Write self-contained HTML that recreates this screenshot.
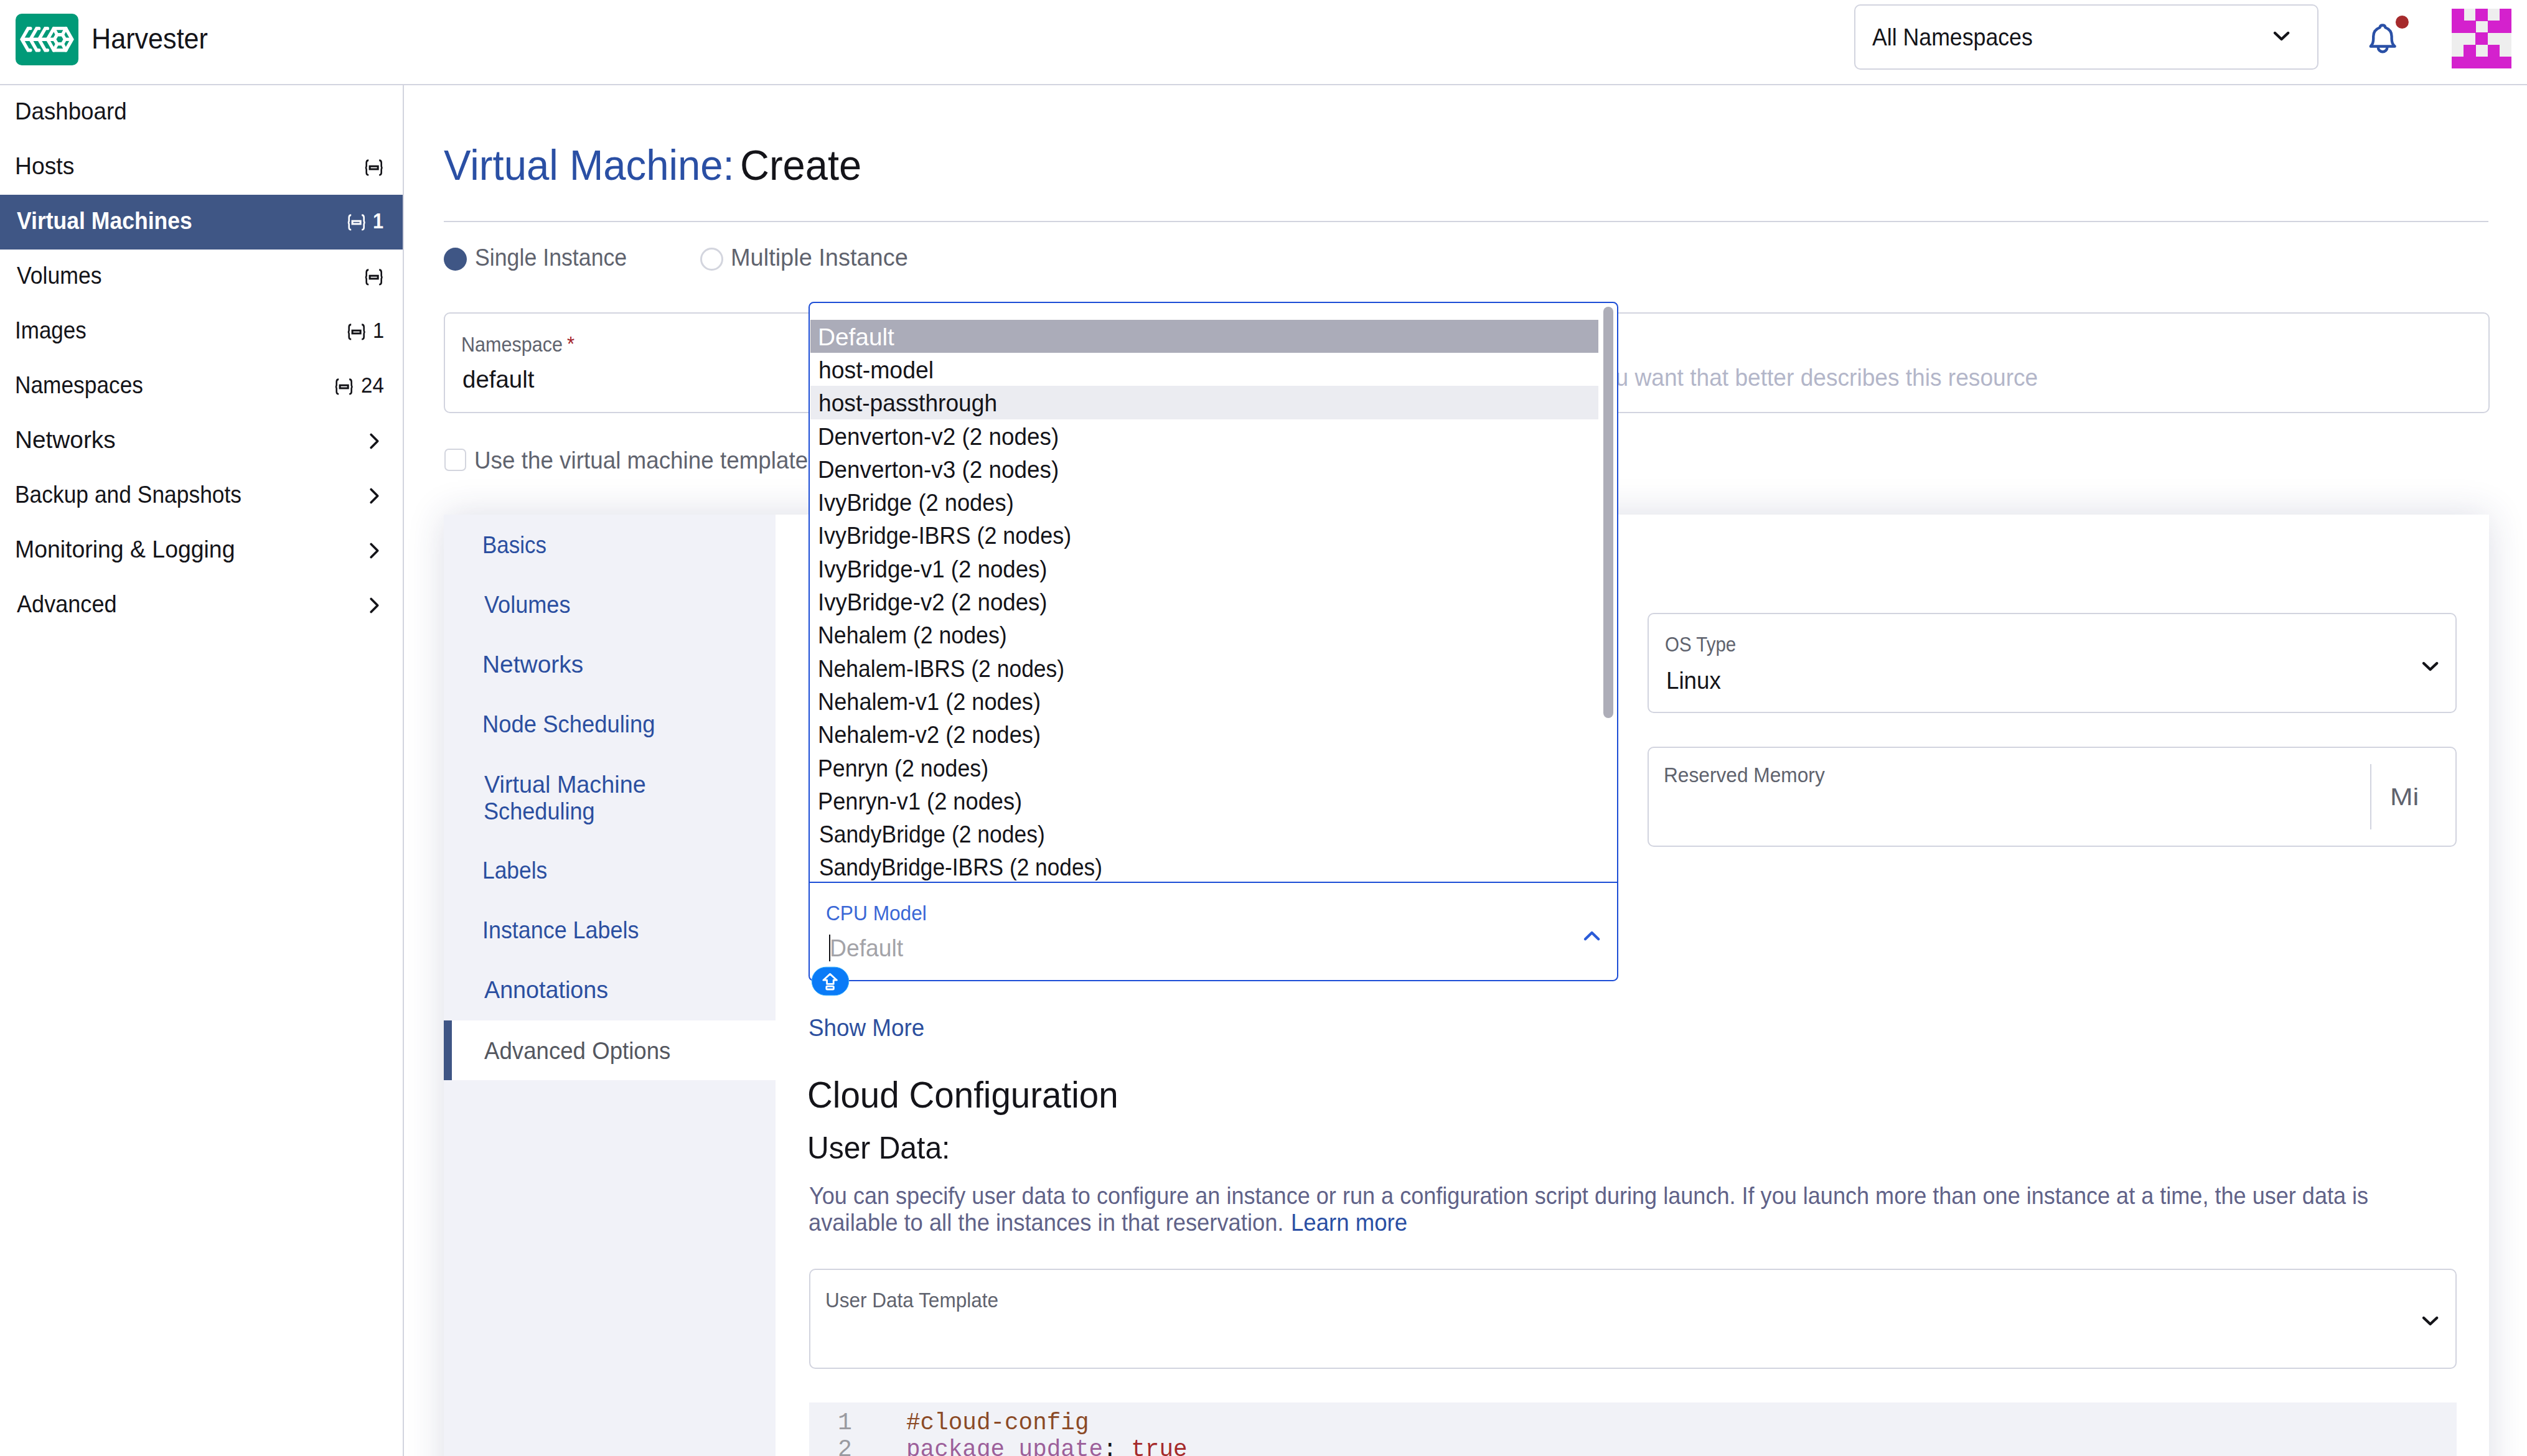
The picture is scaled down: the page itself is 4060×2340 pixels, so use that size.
<!DOCTYPE html>
<html><head><meta charset="utf-8"><title>Harvester - Virtual Machine: Create</title>
<style>
html,body{margin:0;padding:0;width:4060px;height:2340px;overflow:hidden;background:#fff;}
body{position:relative;font-family:'Liberation Sans', sans-serif;}
.t{position:absolute;white-space:nowrap;line-height:1;transform-origin:0 0;}
</style></head><body>
<div style="position:absolute;left:0.00px;top:135.00px;width:4060.00px;height:2.00px;background:#d2d4df"></div>
<div style="position:absolute;left:647.00px;top:137.00px;width:2.00px;height:2203.00px;background:#d2d4df"></div>
<div style="position:absolute;left:0.00px;top:313.00px;width:647.00px;height:88.00px;background:#3f5685"></div>
<svg style="position:absolute;left:25px;top:22px" width="101" height="83" viewBox="0 0 101 83">
<rect x="0" y="0" width="101" height="83" rx="10" fill="#009a78"/>
<g fill="none" stroke="#fff" stroke-width="5.35" stroke-linecap="round" stroke-linejoin="miter">
<polyline points="23.9,23.65 20.2,23.65 10.1,41.2 20.2,58.75 23.9,58.75"/>
<polyline points="37.65,23.65 33.95,23.65 23.85,41.2 33.95,58.75 37.65,58.75"/>
<polyline points="51.4,23.65 47.7,23.65 37.6,41.2 47.7,58.75 51.4,58.75"/>
<polygon points="51.35,41.2 61.45,23.65 80.75,23.65 90.8,41.2 80.75,58.75 61.45,58.75"/>
<polygon points="62.36,41.2 66.68,33.77 75.32,33.77 79.64,41.2 75.32,48.63 66.68,48.63"/>
<line x1="10.1" y1="41.2" x2="62.36" y2="41.2" stroke-linecap="butt"/><line x1="79.64" y1="41.2" x2="90.8" y2="41.2" stroke-linecap="butt"/>
<line x1="66.68" y1="33.77" x2="61.45" y2="23.65"/><line x1="75.32" y1="33.77" x2="80.75" y2="23.65"/>
<line x1="66.68" y1="48.63" x2="61.45" y2="58.75"/><line x1="75.32" y1="48.63" x2="80.75" y2="58.75"/>
</g></svg>
<div style="position:absolute;left:2979.00px;top:7.00px;width:746.00px;height:105.00px;box-sizing:border-box;border:2px solid #d2d4df;border-radius:10px"></div>
<svg style="position:absolute;left:3644.90px;top:42.70px" width="41.20" height="30.00" viewBox="3644.90 42.70 41.20 30.00"><polyline points="3654.90,52.70 3665.50,62.70 3676.10,52.70" fill="none" stroke="#141419" stroke-width="4.40" stroke-linecap="round" stroke-linejoin="round"/></svg>
<svg style="position:absolute;left:3796px;top:20px" width="80" height="76" viewBox="3796 20 80 76">
<g fill="none" stroke="#2a50a6" stroke-width="4.4" stroke-linecap="round" stroke-linejoin="round">
<path d="M3808.8,74.5 L3847.6,74.5"/>
<path d="M3809.5,73.5 C3812.5,70.5 3813.2,67 3813.2,62 L3813.2,58.5 C3813.2,51 3817.5,46.5 3823.5,44.2 A4.6,4.6 0 0 1 3832.5,44.2 C3838.5,46.5 3842.6,51 3842.6,58.5 L3842.6,62 C3842.6,67 3843.5,70.5 3846.5,73.5"/>
<path d="M3820.8,76 A7.3,7.3 0 0 0 3835.4,76"/>
</g><circle cx="3859.4" cy="35.5" r="10.5" fill="#a62a2c"/></svg>
<svg style="position:absolute;left:3939px;top:14px" width="96" height="96" viewBox="0 0 5 5" shape-rendering="crispEdges"><rect width="5" height="5" fill="#eeeeee"/><rect x="0" y="0" width="1.02" height="1.02" fill="#d421cd"/><rect x="2" y="0" width="1.02" height="1.02" fill="#d421cd"/><rect x="4" y="0" width="1.02" height="1.02" fill="#d421cd"/><rect x="0" y="1" width="1.02" height="1.02" fill="#d421cd"/><rect x="1" y="1" width="1.02" height="1.02" fill="#d421cd"/><rect x="3" y="1" width="1.02" height="1.02" fill="#d421cd"/><rect x="4" y="1" width="1.02" height="1.02" fill="#d421cd"/><rect x="2" y="2" width="1.02" height="1.02" fill="#d421cd"/><rect x="1" y="3" width="1.02" height="1.02" fill="#d421cd"/><rect x="3" y="3" width="1.02" height="1.02" fill="#d421cd"/><rect x="0" y="4" width="1.02" height="1.02" fill="#d421cd"/><rect x="1" y="4" width="1.02" height="1.02" fill="#d421cd"/><rect x="2" y="4" width="1.02" height="1.02" fill="#d421cd"/><rect x="3" y="4" width="1.02" height="1.02" fill="#d421cd"/><rect x="4" y="4" width="1.02" height="1.02" fill="#d421cd"/></svg>
<svg style="position:absolute;left:584.5px;top:255.5px" width="32" height="28" viewBox="0 0 32 28"><g fill="none" stroke="#141419" stroke-width="2.6">
<path d="M7.2,1.6 C4.3,1.6 3.7,3.3 3.7,5.5 L3.7,10.6 C3.7,12.7 3.2,13.5 2.0,13.7 C3.2,13.9 3.7,14.7 3.7,16.8 L3.7,21.4 C3.7,23.6 4.3,25.2 7.2,25.2"/>
<path d="M24.2,1.6 C27.1,1.6 27.7,3.3 27.7,5.5 L27.7,10.6 C27.7,12.7 28.2,13.5 29.4,13.7 C28.2,13.9 27.7,14.7 27.7,16.8 L27.7,21.4 C27.7,23.6 27.1,25.2 24.2,25.2"/>
<rect x="9.1" y="11.2" width="13.1" height="4.7" stroke-width="3"/></g></svg>
<svg style="position:absolute;left:556.5px;top:343.5px" width="32" height="28" viewBox="0 0 32 28"><g fill="none" stroke="#ffffff" stroke-width="2.6">
<path d="M7.2,1.6 C4.3,1.6 3.7,3.3 3.7,5.5 L3.7,10.6 C3.7,12.7 3.2,13.5 2.0,13.7 C3.2,13.9 3.7,14.7 3.7,16.8 L3.7,21.4 C3.7,23.6 4.3,25.2 7.2,25.2"/>
<path d="M24.2,1.6 C27.1,1.6 27.7,3.3 27.7,5.5 L27.7,10.6 C27.7,12.7 28.2,13.5 29.4,13.7 C28.2,13.9 27.7,14.7 27.7,16.8 L27.7,21.4 C27.7,23.6 27.1,25.2 24.2,25.2"/>
<rect x="9.1" y="11.2" width="13.1" height="4.7" stroke-width="3"/></g></svg>
<svg style="position:absolute;left:584.5px;top:431.5px" width="32" height="28" viewBox="0 0 32 28"><g fill="none" stroke="#141419" stroke-width="2.6">
<path d="M7.2,1.6 C4.3,1.6 3.7,3.3 3.7,5.5 L3.7,10.6 C3.7,12.7 3.2,13.5 2.0,13.7 C3.2,13.9 3.7,14.7 3.7,16.8 L3.7,21.4 C3.7,23.6 4.3,25.2 7.2,25.2"/>
<path d="M24.2,1.6 C27.1,1.6 27.7,3.3 27.7,5.5 L27.7,10.6 C27.7,12.7 28.2,13.5 29.4,13.7 C28.2,13.9 27.7,14.7 27.7,16.8 L27.7,21.4 C27.7,23.6 27.1,25.2 24.2,25.2"/>
<rect x="9.1" y="11.2" width="13.1" height="4.7" stroke-width="3"/></g></svg>
<svg style="position:absolute;left:556.5px;top:519.5px" width="32" height="28" viewBox="0 0 32 28"><g fill="none" stroke="#141419" stroke-width="2.6">
<path d="M7.2,1.6 C4.3,1.6 3.7,3.3 3.7,5.5 L3.7,10.6 C3.7,12.7 3.2,13.5 2.0,13.7 C3.2,13.9 3.7,14.7 3.7,16.8 L3.7,21.4 C3.7,23.6 4.3,25.2 7.2,25.2"/>
<path d="M24.2,1.6 C27.1,1.6 27.7,3.3 27.7,5.5 L27.7,10.6 C27.7,12.7 28.2,13.5 29.4,13.7 C28.2,13.9 27.7,14.7 27.7,16.8 L27.7,21.4 C27.7,23.6 27.1,25.2 24.2,25.2"/>
<rect x="9.1" y="11.2" width="13.1" height="4.7" stroke-width="3"/></g></svg>
<svg style="position:absolute;left:537.0px;top:607.5px" width="32" height="28" viewBox="0 0 32 28"><g fill="none" stroke="#141419" stroke-width="2.6">
<path d="M7.2,1.6 C4.3,1.6 3.7,3.3 3.7,5.5 L3.7,10.6 C3.7,12.7 3.2,13.5 2.0,13.7 C3.2,13.9 3.7,14.7 3.7,16.8 L3.7,21.4 C3.7,23.6 4.3,25.2 7.2,25.2"/>
<path d="M24.2,1.6 C27.1,1.6 27.7,3.3 27.7,5.5 L27.7,10.6 C27.7,12.7 28.2,13.5 29.4,13.7 C28.2,13.9 27.7,14.7 27.7,16.8 L27.7,21.4 C27.7,23.6 27.1,25.2 24.2,25.2"/>
<rect x="9.1" y="11.2" width="13.1" height="4.7" stroke-width="3"/></g></svg>
<svg style="position:absolute;left:585px;top:692px" width="30" height="34" viewBox="585 692 30 34"><polyline points="596.2,698.5 606.7,709.0 596.2,719.5" fill="none" stroke="#141419" stroke-width="3.7" stroke-linecap="round" stroke-linejoin="round"/></svg>
<svg style="position:absolute;left:585px;top:780px" width="30" height="34" viewBox="585 780 30 34"><polyline points="596.2,786.5 606.7,797.0 596.2,807.5" fill="none" stroke="#141419" stroke-width="3.7" stroke-linecap="round" stroke-linejoin="round"/></svg>
<svg style="position:absolute;left:585px;top:868px" width="30" height="34" viewBox="585 868 30 34"><polyline points="596.2,874.5 606.7,885.0 596.2,895.5" fill="none" stroke="#141419" stroke-width="3.7" stroke-linecap="round" stroke-linejoin="round"/></svg>
<svg style="position:absolute;left:585px;top:956px" width="30" height="34" viewBox="585 956 30 34"><polyline points="596.2,962.5 606.7,973.0 596.2,983.5" fill="none" stroke="#141419" stroke-width="3.7" stroke-linecap="round" stroke-linejoin="round"/></svg>
<div style="position:absolute;left:713.00px;top:355.00px;width:3285.00px;height:2.00px;background:#d2d4df"></div>
<div style="position:absolute;left:713.00px;top:397.50px;width:37.00px;height:37.00px;border-radius:50%;background:#3f5685"></div>
<div style="position:absolute;left:1125.00px;top:397.50px;width:37.00px;height:37.00px;box-sizing:border-box;border-radius:50%;border:3px solid #d3d5de"></div>
<div style="position:absolute;left:713.00px;top:502.00px;width:900.00px;height:162.00px;box-sizing:border-box;border:2px solid #d2d4df;border-radius:10px"></div>
<div style="position:absolute;left:2000.00px;top:502.00px;width:2000.00px;height:162.00px;box-sizing:border-box;border:2px solid #d2d4df;border-radius:10px"></div>
<div style="position:absolute;left:714.00px;top:721.00px;width:35.00px;height:36.00px;box-sizing:border-box;border:2px solid #d3d5de;border-radius:7px"></div>
<div style="position:absolute;left:713.00px;top:827.00px;width:3286.00px;height:1700.00px;background:#fff;box-shadow:0 0 56px rgba(40,45,100,0.16)"></div>
<div style="position:absolute;left:713.00px;top:827.00px;width:533.00px;height:1700.00px;background:#f1f2f8"></div>
<div style="position:absolute;left:713.00px;top:1640.00px;width:533.00px;height:96.00px;background:#fff"></div>
<div style="position:absolute;left:713.00px;top:1640.00px;width:13.00px;height:96.00px;background:#3f5685"></div>
<div style="position:absolute;left:2647.00px;top:985.00px;width:1300.00px;height:161.00px;box-sizing:border-box;border:2px solid #d2d4df;border-radius:10px"></div>
<svg style="position:absolute;left:3884.10px;top:1055.80px" width="41.20" height="30.00" viewBox="3884.10 1055.80 41.20 30.00"><polyline points="3894.10,1065.80 3904.70,1075.80 3915.30,1065.80" fill="none" stroke="#141419" stroke-width="4.40" stroke-linecap="round" stroke-linejoin="round"/></svg>
<div style="position:absolute;left:2647.00px;top:1200.00px;width:1300.00px;height:161.00px;box-sizing:border-box;border:2px solid #d2d4df;border-radius:10px"></div>
<div style="position:absolute;left:3808.00px;top:1227.50px;width:2.00px;height:105.00px;background:#d2d4df"></div>
<div style="position:absolute;left:1300.00px;top:2039.00px;width:2647.00px;height:161.00px;box-sizing:border-box;border:2px solid #d2d4df;border-radius:10px"></div>
<svg style="position:absolute;left:3883.70px;top:2108.30px" width="41.20" height="30.00" viewBox="3883.70 2108.30 41.20 30.00"><polyline points="3893.70,2118.30 3904.30,2128.30 3914.90,2118.30" fill="none" stroke="#141419" stroke-width="4.40" stroke-linecap="round" stroke-linejoin="round"/></svg>
<div style="position:absolute;left:1300.00px;top:2254.00px;width:2647.00px;height:200.00px;background:#f1f2f7"></div>
<div class="t" style="left:147.15px;top:40.49px;font-size:45.49px;color:#141419;transform:scaleX(0.9484);">Harvester</div>
<div class="t" style="left:3008.00px;top:39.91px;font-size:39.68px;color:#141419;transform:scaleX(0.8992);">All Namespaces</div>
<div class="t" style="left:24.20px;top:158.66px;font-size:39.39px;color:#141419;transform:scaleX(0.9322);">Dashboard</div>
<div class="t" style="left:24.16px;top:246.66px;font-size:39.39px;color:#141419;transform:scaleX(0.9468);">Hosts</div>
<div class="t" style="left:27.00px;top:334.66px;font-size:39.39px;color:#ffffff;font-weight:bold;transform:scaleX(0.9027);">Virtual Machines</div>
<div class="t" style="left:27.00px;top:422.66px;font-size:39.39px;color:#141419;transform:scaleX(0.9047);">Volumes</div>
<div class="t" style="left:24.33px;top:510.66px;font-size:39.39px;color:#141419;transform:scaleX(0.8889);">Images</div>
<div class="t" style="left:24.31px;top:598.66px;font-size:39.39px;color:#141419;transform:scaleX(0.8961);">Namespaces</div>
<div class="t" style="left:24.05px;top:686.66px;font-size:39.39px;color:#141419;transform:scaleX(0.9850);">Networks</div>
<div class="t" style="left:24.30px;top:774.66px;font-size:39.39px;color:#141419;transform:scaleX(0.8989);">Backup and Snapshots</div>
<div class="t" style="left:24.15px;top:862.66px;font-size:39.39px;color:#141419;transform:scaleX(0.9498);">Monitoring &amp; Logging</div>
<div class="t" style="left:27.00px;top:950.66px;font-size:39.39px;color:#141419;transform:scaleX(0.9167);">Advanced</div>
<div class="t" style="left:599.24px;top:338.47px;font-size:34.88px;color:#ffffff;font-weight:bold;transform:scaleX(0.8824);">1</div>
<div class="t" style="left:599.12px;top:514.47px;font-size:34.88px;color:#141419;transform:scaleX(0.9375);">1</div>
<div class="t" style="left:580.05px;top:602.47px;font-size:34.88px;color:#141419;transform:scaleX(0.9493);">24</div>
<div class="t" style="left:713.00px;top:231.42px;font-size:68.02px;color:#2a4fa4;transform:scaleX(0.9596);">Virtual Machine:</div>
<div class="t" style="left:1189.13px;top:231.42px;font-size:68.02px;color:#141419;transform:scaleX(0.9562);">Create</div>
<div class="t" style="left:763.09px;top:393.66px;font-size:39.39px;color:#5f636e;transform:scaleX(0.9071);">Single Instance</div>
<div class="t" style="left:1174.11px;top:393.66px;font-size:39.39px;color:#5f636e;transform:scaleX(0.9638);">Multiple Instance</div>
<div class="t" style="left:741.19px;top:537.16px;font-size:33.72px;color:#5f636e;transform:scaleX(0.9059);">Namespace</div>
<div class="t" style="left:911.00px;top:535.96px;font-size:33.72px;color:#a4262c;transform:scaleX(0.9231);">*</div>
<div class="t" style="left:743.02px;top:590.16px;font-size:39.39px;color:#141419;transform:scaleX(0.9763);">default</div>
<div class="t" style="left:2411.62px;top:587.26px;font-size:39.39px;color:#b3b6c9;transform:scaleX(0.9425);">Any text you want that better describes this resource</div>
<div class="t" style="left:762.20px;top:719.66px;font-size:39.39px;color:#5f636e;transform:scaleX(0.9350);">Use the virtual machine template</div>
<div class="t" style="left:775.34px;top:855.66px;font-size:39.39px;color:#2b4fa0;transform:scaleX(0.8879);">Basics</div>
<div class="t" style="left:778.00px;top:951.66px;font-size:39.39px;color:#2b4fa0;transform:scaleX(0.9166);">Volumes</div>
<div class="t" style="left:775.03px;top:1048.36px;font-size:39.39px;color:#2b4fa0;transform:scaleX(0.9887);">Networks</div>
<div class="t" style="left:775.22px;top:1144.16px;font-size:39.39px;color:#2b4fa0;transform:scaleX(0.9251);">Node Scheduling</div>
<div class="t" style="left:778.00px;top:1240.66px;font-size:39.39px;color:#2b4fa0;transform:scaleX(0.9594);">Virtual Machine</div>
<div class="t" style="left:777.08px;top:1283.66px;font-size:39.39px;color:#2b4fa0;transform:scaleX(0.9170);">Scheduling</div>
<div class="t" style="left:775.30px;top:1378.66px;font-size:39.39px;color:#2b4fa0;transform:scaleX(0.8990);">Labels</div>
<div class="t" style="left:775.27px;top:1474.66px;font-size:39.39px;color:#2b4fa0;transform:scaleX(0.9113);">Instance Labels</div>
<div class="t" style="left:778.00px;top:1571.06px;font-size:39.39px;color:#2b4fa0;transform:scaleX(0.9576);">Annotations</div>
<div class="t" style="left:778.00px;top:1668.66px;font-size:39.39px;color:#54575f;transform:scaleX(0.9306);">Advanced Options</div>
<div class="t" style="left:2675.13px;top:1019.46px;font-size:33.72px;color:#5f636e;transform:scaleX(0.8746);">OS Type</div>
<div class="t" style="left:2676.80px;top:1073.76px;font-size:39.39px;color:#141419;transform:scaleX(0.9339);">Linux</div>
<div class="t" style="left:2673.12px;top:1229.46px;font-size:33.72px;color:#5f636e;transform:scaleX(0.9394);">Reserved Memory</div>
<div class="t" style="left:3839.66px;top:1260.66px;font-size:39.39px;color:#5f636e;transform:scaleX(1.1141);">Mi</div>
<div class="t" style="left:1299.07px;top:1632.36px;font-size:39.39px;color:#2c4f9e;transform:scaleX(0.9349);">Show More</div>
<div class="t" style="left:1297.14px;top:1729.80px;font-size:59.30px;color:#141419;transform:scaleX(0.9534);">Cloud Configuration</div>
<div class="t" style="left:1297.17px;top:1820.44px;font-size:50.87px;color:#141419;transform:scaleX(0.9439);">User Data:</div>
<div class="t" style="left:1300.00px;top:1902.64px;font-size:38.23px;color:#606288;transform:scaleX(0.9438);">You can specify user data to configure an instance or run a configuration script during launch. If you launch more than one instance at a time, the user data is</div>
<div class="t" style="left:1299.05px;top:1945.64px;font-size:38.23px;color:#606288;transform:scaleX(0.9507);">available to all the instances in that reservation.</div>
<div class="t" style="left:2074.13px;top:1945.64px;font-size:38.23px;color:#2a4fa4;transform:scaleX(0.9572);">Learn more</div>
<div class="t" style="left:1326.13px;top:2073.46px;font-size:33.72px;color:#5f636e;transform:scaleX(0.9349);">User Data Template</div>
<div class="t" style="left:1346px;top:2267.7px;font-family:'Liberation Mono', monospace;font-size:38px;color:#9a9aa0;">1</div>
<div class="t" style="left:1346px;top:2310.7px;font-family:'Liberation Mono', monospace;font-size:38px;color:#9a9aa0;">2</div>
<div class="t" style="left:1455.5px;top:2267.7px;font-family:'Liberation Mono', monospace;font-size:38px;color:#8b4a26;transform:scaleX(0.99);transform-origin:0 0">#cloud-config</div>
<div class="t" style="left:1455.5px;top:2310.7px;font-family:'Liberation Mono', monospace;font-size:38px;color:#141419;transform:scaleX(0.99);transform-origin:0 0"><span style="color:#9c5f9a">package_update</span>: <span style="color:#a52a2a">true</span></div>
<div style="position:absolute;left:1299.00px;top:484.50px;width:1300.50px;height:1092.50px;box-sizing:border-box;border:2.5px solid #1c4dd6;border-radius:8.5px;background:#fff"></div>
<div style="position:absolute;left:0;top:0;width:4060px;height:2340px;clip-path:inset(487px 1460px 923px 1302px)">
<div style="position:absolute;left:1302.00px;top:513.70px;width:1266.00px;height:53.30px;background:#abacb9"></div>
<div style="position:absolute;left:1302.00px;top:620.30px;width:1266.00px;height:53.30px;background:#ebecf1"></div>
<div class="t" style="left:1314.04px;top:521.66px;font-size:39.39px;color:#ffffff;transform:scaleX(0.9851);">Default</div>
<div class="t" style="left:1315.10px;top:574.96px;font-size:39.39px;color:#141419;transform:scaleX(0.9501);">host-model</div>
<div class="t" style="left:1315.11px;top:628.26px;font-size:39.39px;color:#141419;transform:scaleX(0.9436);">host-passthrough</div>
<div class="t" style="left:1314.19px;top:681.56px;font-size:39.39px;color:#141419;transform:scaleX(0.9360);">Denverton-v2 (2 nodes)</div>
<div class="t" style="left:1314.19px;top:734.86px;font-size:39.39px;color:#141419;transform:scaleX(0.9360);">Denverton-v3 (2 nodes)</div>
<div class="t" style="left:1314.23px;top:788.16px;font-size:39.39px;color:#141419;transform:scaleX(0.9218);">IvyBridge (2 nodes)</div>
<div class="t" style="left:1314.26px;top:841.46px;font-size:39.39px;color:#141419;transform:scaleX(0.9120);">IvyBridge-IBRS (2 nodes)</div>
<div class="t" style="left:1314.21px;top:894.76px;font-size:39.39px;color:#141419;transform:scaleX(0.9304);">IvyBridge-v1 (2 nodes)</div>
<div class="t" style="left:1314.21px;top:948.06px;font-size:39.39px;color:#141419;transform:scaleX(0.9304);">IvyBridge-v2 (2 nodes)</div>
<div class="t" style="left:1314.28px;top:1001.36px;font-size:39.39px;color:#141419;transform:scaleX(0.9068);">Nehalem (2 nodes)</div>
<div class="t" style="left:1314.30px;top:1054.66px;font-size:39.39px;color:#141419;transform:scaleX(0.9005);">Nehalem-IBRS (2 nodes)</div>
<div class="t" style="left:1314.24px;top:1107.96px;font-size:39.39px;color:#141419;transform:scaleX(0.9190);">Nehalem-v1 (2 nodes)</div>
<div class="t" style="left:1314.24px;top:1161.26px;font-size:39.39px;color:#141419;transform:scaleX(0.9190);">Nehalem-v2 (2 nodes)</div>
<div class="t" style="left:1314.28px;top:1214.56px;font-size:39.39px;color:#141419;transform:scaleX(0.9073);">Penryn (2 nodes)</div>
<div class="t" style="left:1314.24px;top:1267.86px;font-size:39.39px;color:#141419;transform:scaleX(0.9197);">Penryn-v1 (2 nodes)</div>
<div class="t" style="left:1316.10px;top:1321.16px;font-size:39.39px;color:#141419;transform:scaleX(0.9008);">SandyBridge (2 nodes)</div>
<div class="t" style="left:1316.10px;top:1374.46px;font-size:39.39px;color:#141419;transform:scaleX(0.8961);">SandyBridge-IBRS (2 nodes)</div>
</div>
<div style="position:absolute;left:2576.00px;top:493.00px;width:16.00px;height:661.00px;background:#adadb8;border-radius:8px"></div>
<div style="position:absolute;left:1301.00px;top:1416.50px;width:1298.00px;height:2.00px;background:#1c4dd6"></div>
<div class="t" style="left:1327.06px;top:1451.46px;font-size:33.72px;color:#3a67d6;transform:scaleX(0.9388);">CPU Model</div>
<div class="t" style="left:1333.16px;top:1503.66px;font-size:39.39px;color:#a3a3a8;transform:scaleX(0.9473);">Default</div>
<div style="position:absolute;left:1332.30px;top:1502.00px;width:2.20px;height:42.50px;background:#141419"></div>
<svg style="position:absolute;left:2536.80px;top:1489.20px" width="41.20" height="30.30" viewBox="2536.80 1489.20 41.20 30.30"><polyline points="2546.80,1509.50 2557.40,1499.20 2568.00,1509.50" fill="none" stroke="#2a5bd8" stroke-width="4.30" stroke-linecap="round" stroke-linejoin="round"/></svg>
<svg style="position:absolute;left:1303px;top:1553px" width="62" height="48" viewBox="0 0 62 48">
<rect x="1.2" y="1.2" width="59.6" height="45.6" rx="22.8" fill="#0a7bf7" stroke="#45b8ff" stroke-width="1"/>
<g fill="none" stroke="#fff" stroke-width="2.8" stroke-linejoin="round"><path d="M30.6,12.4 L19.8,22.2 L25.6,22.2 L25.6,28.4 L36.2,28.4 L36.2,22.2 L41.4,22.2 Z"/><rect x="24.8" y="32.1" width="11.6" height="4.9" rx="1.2"/></g></svg>
</body></html>
